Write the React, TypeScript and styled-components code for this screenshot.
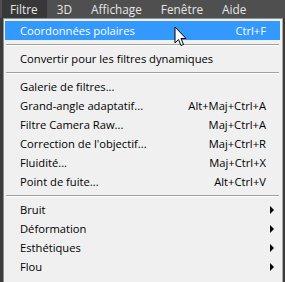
import React from "react";
import styled, { createGlobalStyle } from "styled-components";

const Global = createGlobalStyle`
  html, body { margin: 0; padding: 0; background: #3c3c3c; overflow: hidden; }
  body { font-family: "Open Sans", "Noto Sans", sans-serif; }
`;

const Page = styled.div`
  position: relative;
  width: 285px;
  height: 282px;
  overflow: hidden;
  background: #3b3b3b;
`;

const MenuBar = styled.div`
  display: flex;
  height: 18px;
  background: #4f4f4f;
  padding-left: 2px;
`;

const BarItem = styled.div<{ $active?: boolean }>`
  display: flex;
  align-items: center;
  padding: 0 9px 0 8px;
  margin-right: 2px;
  font-size: 11.8px;
  color: #e6e6e6;
  background: ${(p) => (p.$active ? "#383838" : "transparent")};
`;

const Dropdown = styled.div`
  margin-left: 3px;
  width: 280px;
  background: #f0f0f0;
  border: 1px solid #8e8e8e;
  border-right-color: #a8a8a8;
  padding: 2px 2px 0 1px;
  box-sizing: border-box;
  height: 300px;
`;

const Row = styled.div<{ $hl?: boolean }>`
  display: flex;
  align-items: center;
  height: 19px;
  padding: 0 14px 0 15px;
  font-size: 11.2px;
  color: ${(p) => (p.$hl ? "#ffffff" : "#000000")};
  background: ${(p) => (p.$hl ? "#3399ff" : "transparent")};
`;

const Label = styled.span`
  flex: 1;
  white-space: nowrap;
`;

const Shortcut = styled.span`
  white-space: nowrap;
`;

const Arrow = styled.span`
  width: 0;
  height: 0;
  border-top: 4px solid transparent;
  border-bottom: 4px solid transparent;
  border-left: 4px solid #000;
  margin-right: -8px;
`;

const Sep = styled.div`
  height: 9px;
  display: flex;
  align-items: center;
  padding: 0 1px;
  &::after {
    content: "";
    flex: 1;
    height: 1px;
    background: #a0a0a0;
    box-shadow: 0 1px 0 #ffffff;
  }
`;

const Cursor = styled.svg`
  position: absolute;
  left: 174px;
  top: 26px;
`;

type Item =
  | { sep: true }
  | { label: string; shortcut?: string; sub?: boolean; hl?: boolean; sep?: false };

const items: Item[] = [
  { label: "Coordonnées polaires", shortcut: "Ctrl+F", hl: true },
  { sep: true },
  { label: "Convertir pour les filtres dynamiques" },
  { sep: true },
  { label: "Galerie de filtres..." },
  { label: "Grand-angle adaptatif...", shortcut: "Alt+Maj+Ctrl+A" },
  { label: "Filtre Camera Raw...", shortcut: "Maj+Ctrl+A" },
  { label: "Correction de l'objectif...", shortcut: "Maj+Ctrl+R" },
  { label: "Fluidité...", shortcut: "Maj+Ctrl+X" },
  { label: "Point de fuite...", shortcut: "Alt+Ctrl+V" },
  { sep: true },
  { label: "Bruit", sub: true },
  { label: "Déformation", sub: true },
  { label: "Esthétiques", sub: true },
  { label: "Flou", sub: true },
  { label: "Galerie de flous", sub: true },
];

export default function App() {
  return (
    <Page>
      <Global />
      <MenuBar>
        <BarItem $active>Filtre</BarItem>
        <BarItem>3D</BarItem>
        <BarItem>Affichage</BarItem>
        <BarItem>Fenêtre</BarItem>
        <BarItem>Aide</BarItem>
      </MenuBar>
      <Dropdown>
        {items.map((it, i) =>
          it.sep ? (
            <Sep key={i} />
          ) : (
            <Row key={i} $hl={it.hl}>
              <Label>{it.label}</Label>
              {it.shortcut && <Shortcut>{it.shortcut}</Shortcut>}
              {it.sub && <Arrow />}
            </Row>
          )
        )}
      </Dropdown>
      <Cursor width="14" height="22" viewBox="0 0 14 22">
        <path
          d="M1 1 L1 17 L4.5 13.5 L7 19.5 L9.5 18.5 L7 12.5 L12 12.5 Z"
          fill="#ffffff"
          stroke="#000000"
          strokeWidth="1"
          strokeLinejoin="miter"
        />
      </Cursor>
    </Page>
  );
}
